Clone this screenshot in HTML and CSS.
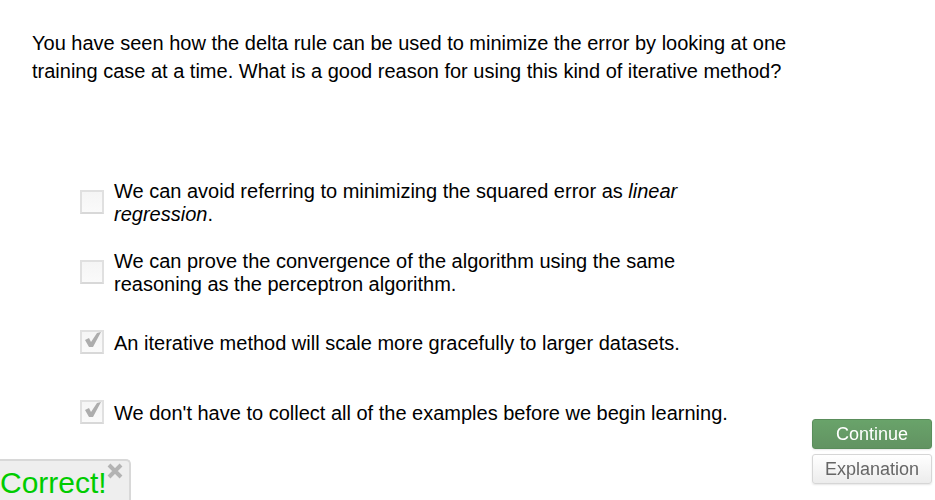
FILE: index.html
```html
<!DOCTYPE html>
<html lang="en">
<head>
<meta charset="utf-8">
<title>Quiz</title>
<link rel="stylesheet" href="styles.css">
</head>
<body>
<form class="quiz">
  <p class="question">You have seen how the delta rule can be used to minimize the error by looking at one training case at a time. What is a good reason for using this kind of iterative method?</p>
  <div class="answers">
    <div class="answer"><input type="checkbox" id="a1"><label for="a1">We can avoid referring to minimizing the squared error as <em>linear regression</em>.</label></div>
    <div class="answer"><input type="checkbox" id="a2"><label for="a2">We can prove the convergence of the algorithm using the same reasoning as the perceptron algorithm.</label></div>
    <div class="answer"><input type="checkbox" id="a3" checked><label for="a3">An iterative method will scale more gracefully to larger datasets.</label></div>
    <div class="answer"><input type="checkbox" id="a4" checked><label for="a4">We don't have to collect all of the examples before we begin learning.</label></div>
  </div>
</form>
<div class="result" role="status">
  <span>Correct!</span>
  <button class="close" type="button" aria-label="Close"><svg viewBox="0 0 16 16"><path d="M2 2l12 12M14 2L2 14"/></svg></button>
</div>
<div class="actions">
  <button class="btn primary" type="button">Continue</button>
  <button class="btn" type="button">Explanation</button>
</div>
</body>
</html>
```
FILE: styles.css
```css
* { box-sizing: border-box; }
body {
  margin: 0;
  min-height: 100vh;
  background: #fff;
  color: #000;
  font: 20px/23px "Liberation Sans", Arial, sans-serif;
}
.quiz { padding: 29px 32px 0; }
.question {
  max-width: 780px;
  margin: 0;
  line-height: 28px;
}
.answers {
  display: grid;
  grid-auto-rows: 46px;
  gap: 24px;
  max-width: 700px;
  padding: 95px 48px 0;
  box-sizing: content-box;
}
.answer {
  display: flex;
  align-items: center;
  gap: 10px;
  max-width: 650px;
}
.answer input {
  appearance: none;
  flex: none;
  width: 24px;
  height: 24px;
  margin: 0 0 3px;
  border: 2px solid #e0e0e0;
  border-bottom-color: #d8d8d8;
  background: linear-gradient(#f5f5f5, #fafafa);
}
.answer input:checked {
  background:
    url("data:image/svg+xml,%3Csvg xmlns='http://www.w3.org/2000/svg' viewBox='0 0 20 20'%3E%3Cpath d='M3 8L7 6L9 10L15 1L19 0L11 15L7 15Z' fill='%23adadad'/%3E%3C/svg%3E"),
    linear-gradient(#f5f5f5, #fafafa);
}
.result {
  position: fixed;
  left: 0;
  bottom: 0;
  display: flex;
  height: 41px;
  padding: 0 6px 0 0;
  border: 2px solid #d8d8d8;
  border-width: 2px 2px 0 0;
  border-radius: 0 5px 0 0;
  background: #eee;
  color: #0c0;
  font-size: 30px;
  line-height: 44px;
}
.close {
  width: 16px;
  height: 16px;
  margin: 2px 0 0;
  padding: 0;
  border: 0;
  background: none;
}
.close svg { display: block; }
.close path { fill: none; stroke: #b3b3b3; stroke-width: 4; }
.actions {
  position: fixed;
  right: 3px;
  bottom: 16px;
  display: grid;
  gap: 5px;
  width: 120px;
}
.btn {
  height: 30px;
  padding: 0;
  border: 1px solid #d6d6d6;
  border-radius: 3px;
  background: linear-gradient(#fff, #ececec);
  box-shadow: 0 1px 2px rgba(0, 0, 0, 0.1);
  color: #666;
  font: 18px/28px "Liberation Sans", Arial, sans-serif;
}
.primary {
  border-color: #5a8d5b;
  background: linear-gradient(#69a36a, #629362);
  color: #fff;
}
```
